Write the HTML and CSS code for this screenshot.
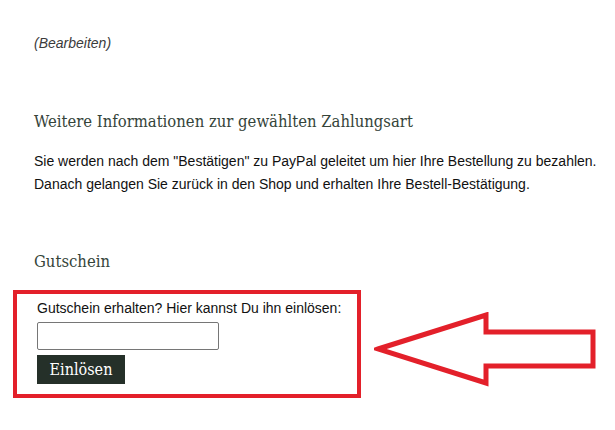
FILE: index.html
```html
<!DOCTYPE html>
<html lang="de">
<head>
<meta charset="utf-8">
<title>Zahlungsart</title>
<link rel="stylesheet" href="styles.css">
</head>
<body>
<div class="page">
  <p class="edit">(Bearbeiten)</p>
  <h2 class="heading info-heading">Weitere Informationen zur gewählten Zahlungsart</h2>
  <p class="info">Sie werden nach dem "Bestätigen" zu PayPal geleitet um hier Ihre Bestellung zu bezahlen.<br>Danach gelangen Sie zurück in den Shop und erhalten Ihre Bestell-Bestätigung.</p>
  <h2 class="heading coupon-heading">Gutschein</h2>
  <div class="coupon-row">
    <form class="coupon-box">
      <label class="coupon-label" for="code">Gutschein erhalten? Hier kannst Du ihn einlösen:</label>
      <input class="coupon-input" id="code" type="text">
      <button class="coupon-btn" type="button">Einlösen</button>
    </form>
  </div>
  <svg class="arrow" width="230" height="80" viewBox="0 0 230 80">
    <polygon points="4,37 112,3 112,20 219,20 219,54 112,54 112,71" fill="none" stroke="#e3202a" stroke-width="5" stroke-linejoin="miter"/>
  </svg>
</div>
</body>
</html>
```
FILE: styles.css
```css
html, body {
  margin: 0;
  padding: 0;
  background: #ffffff;
}
.page {
  position: relative;
  width: 615px;
  height: 430px;
  padding: 0 0 0 34px;
  box-sizing: border-box;
  font-family: "Liberation Sans", Arial, sans-serif;
  color: #1a1a1a;
}
.edit {
  margin: 0;
  padding-top: 35px;
  font-size: 14px;
  line-height: 16px;
  font-style: italic;
  color: #3b3b3b;
}
.heading {
  margin: 0;
  font-family: "DejaVu Serif", serif;
  font-stretch: semi-condensed;
  font-weight: normal;
  color: #35443a;
}
.info-heading {
  margin-top: 60px;
  font-size: 16.5px;
  line-height: 22px;
}
.info {
  margin: 17px 0 0;
  font-size: 14px;
  line-height: 23px;
  color: #111;
}
.coupon-heading {
  margin-top: 55px;
  font-size: 16.5px;
  line-height: 22px;
}
.coupon-row {
  margin-left: -21px;
  margin-top: 17px;
}
.coupon-box {
  display: flex;
  flex-direction: column;
  align-items: flex-start;
  width: 348px;
  height: 108px;
  border: 4px solid #e3202a;
  padding: 6px 0 0 20px;
  box-sizing: border-box;
  margin: 0;
}
.coupon-label {
  font-size: 14px;
  line-height: 16px;
  color: #111;
}
.coupon-input {
  margin-top: 6px;
  width: 182px;
  height: 28px;
  box-sizing: border-box;
  border: 1px solid #767676;
  border-radius: 2px;
  padding: 0 4px;
}
.coupon-btn {
  margin-top: 5px;
  width: 88px;
  height: 29px;
  border: none;
  background: #253029;
  color: #ffffff;
  font-family: "DejaVu Serif", serif;
  font-stretch: semi-condensed;
  font-size: 16px;
  padding: 0;
}
.arrow {
  position: absolute;
  left: 374px;
  top: 312px;
}
```
